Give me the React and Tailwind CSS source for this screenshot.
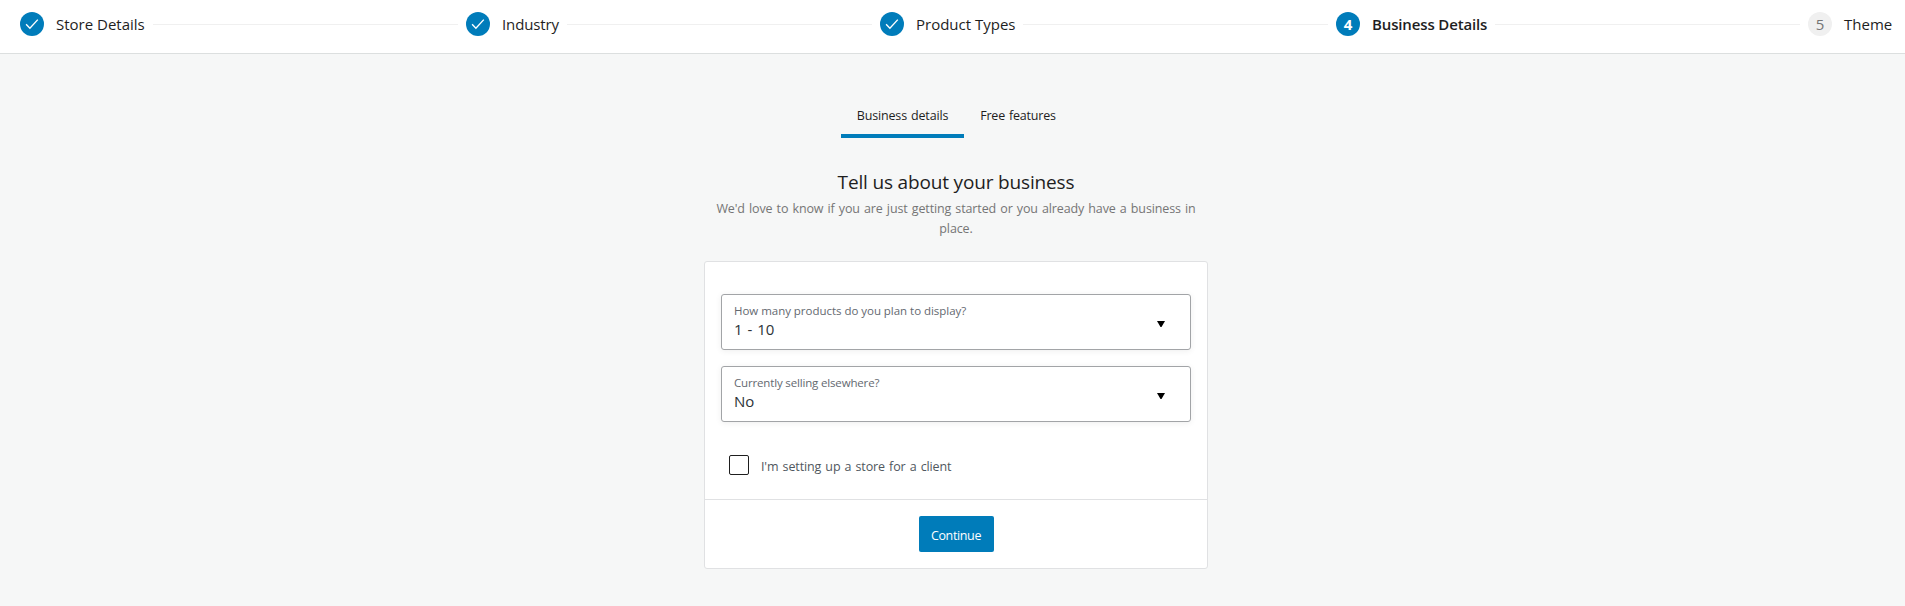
import { Fragment } from "react";

const STEPS = [
  { label: "Store Details", state: "done", width: "w-[89px]" },
  { label: "Industry", state: "done", width: "w-[57px] tracking-[-0.12px]" },
  { label: "Product Types", state: "done", width: "w-[99px]" },
  { label: "Business Details", state: "current", width: "w-[115px]" },
  { label: "Theme", state: "upcoming", width: "w-[49px]" },
];

function StepBadge({ state, number }) {
  if (state === "done") {
    return (
      <span className="flex size-6 items-center justify-center rounded-full bg-[#007cba]">
        <svg viewBox="0 0 24 24" className="size-6" fill="none" stroke="#fff" strokeWidth="1.4">
          <path d="M6.1 12.3l3.8 3.9L17.8 7.6" />
        </svg>
      </span>
    );
  }
  const look =
    state === "current"
      ? "bg-[#007cba] font-bold text-white"
      : "bg-[#f0f0f0] text-[#757575]";
  return (
    <span className={`flex size-6 items-center justify-center rounded-full text-[15px] leading-6 ${look}`}>
      {number}
    </span>
  );
}

function Stepper() {
  return (
    <header className="flex h-[54px] items-start border-b border-[#dcdfdf] bg-white pt-3 pr-3 pl-5">
      {STEPS.map((step, i) => (
        <Fragment key={step.label}>
          {i > 0 && <span className="mx-2 mt-3 h-px flex-1 bg-[#f0f0f0]" />}
          <div className="flex shrink-0 items-center gap-3">
            <StepBadge state={step.state} number={i + 1} />
            <span
              className={`whitespace-nowrap pt-px text-[15px] leading-[23px] text-[#1e1e1e] ${step.width} ${
                step.state === "current" ? "font-semibold tracking-[-0.14px]" : ""
              }`}
            >
              {step.label}
            </span>
          </div>
        </Fragment>
      ))}
    </header>
  );
}

function SelectField({ label, value, labelSpacing }) {
  return (
    <button
      type="button"
      className="flex h-14 w-full items-center justify-between rounded-[3px] border border-[#a2a4a7] bg-white pr-[25px] pb-0.5 pl-3 text-left shadow-[0_1px_6px_rgba(0,0,0,0.07)]"
    >
      <span className="flex flex-col">
        <span className={`text-[11.5px] leading-4 text-[#646970] ${labelSpacing}`}>{label}</span>
        <span className="text-[15px] leading-[21px] text-[#2c3338] [word-spacing:1px]">{value}</span>
      </span>
      <svg viewBox="0 0 8 6" className="mt-1.5 h-1.5 w-2" fill="#000">
        <path d="M0 0h8L4.5 6h-1z" />
      </svg>
    </button>
  );
}

export default function App() {
  return (
    <div className="min-h-screen bg-[#f6f7f7] font-['Open_Sans','Noto_Sans',sans-serif] text-[#1e1e1e]">
      <Stepper />
      <main className="flex flex-col items-center pt-9 pl-[7px]">
        <nav className="flex h-12 text-[12.5px] leading-[18px]">
          <button type="button" className="w-[123px] border-b-4 border-[#007cba] pt-2 pl-px tracking-[-0.16px] [word-spacing:1px]">
            Business details
          </button>
          <button type="button" className="w-[108px] border-b-4 border-transparent pt-2 pl-px tracking-[-0.2px] [word-spacing:1px]">
            Free features
          </button>
        </nav>
        <h1 className="mt-[30px] text-[19px] leading-7 tracking-[-0.16px]">Tell us about your business</h1>
        <p className="mt-[3px] w-[504px] px-3 text-center text-[12.5px] leading-5 tracking-[-0.12px] text-[#757575] [word-spacing:1px]">
          We'd love to know if you are just getting started or you already have a business in place.
        </p>
        <section className="mt-[22px] w-[504px] rounded-[3px] border border-[#e0e1e3] bg-white">
          <div className="flex flex-col gap-4 px-4 pt-8">
            <SelectField
              label="How many products do you plan to display?"
              value="1 - 10"
              labelSpacing="tracking-[-0.03px]"
            />
            <SelectField
              label="Currently selling elsewhere?"
              value="No"
              labelSpacing="tracking-[-0.16px]"
            />
          </div>
          <label className="flex h-[77px] items-start gap-3 px-6 pt-[33px] text-[12.5px] leading-5 tracking-[-0.12px] text-[#50575e] [word-spacing:1px]">
            <span className="size-5 shrink-0 rounded-[2px] border border-[#1e1e1e] bg-white" />
            <span className="pt-0.5">I'm setting up a store for a client</span>
          </label>
          <footer className="flex justify-center border-t border-[#e0e1e3] py-4">
            <button
              type="button"
              className="h-9 w-[75px] rounded-[2px] bg-[#007cba] pt-1 text-[12.5px] tracking-[-0.35px] text-white"
            >
              Continue
            </button>
          </footer>
        </section>
      </main>
    </div>
  );
}
